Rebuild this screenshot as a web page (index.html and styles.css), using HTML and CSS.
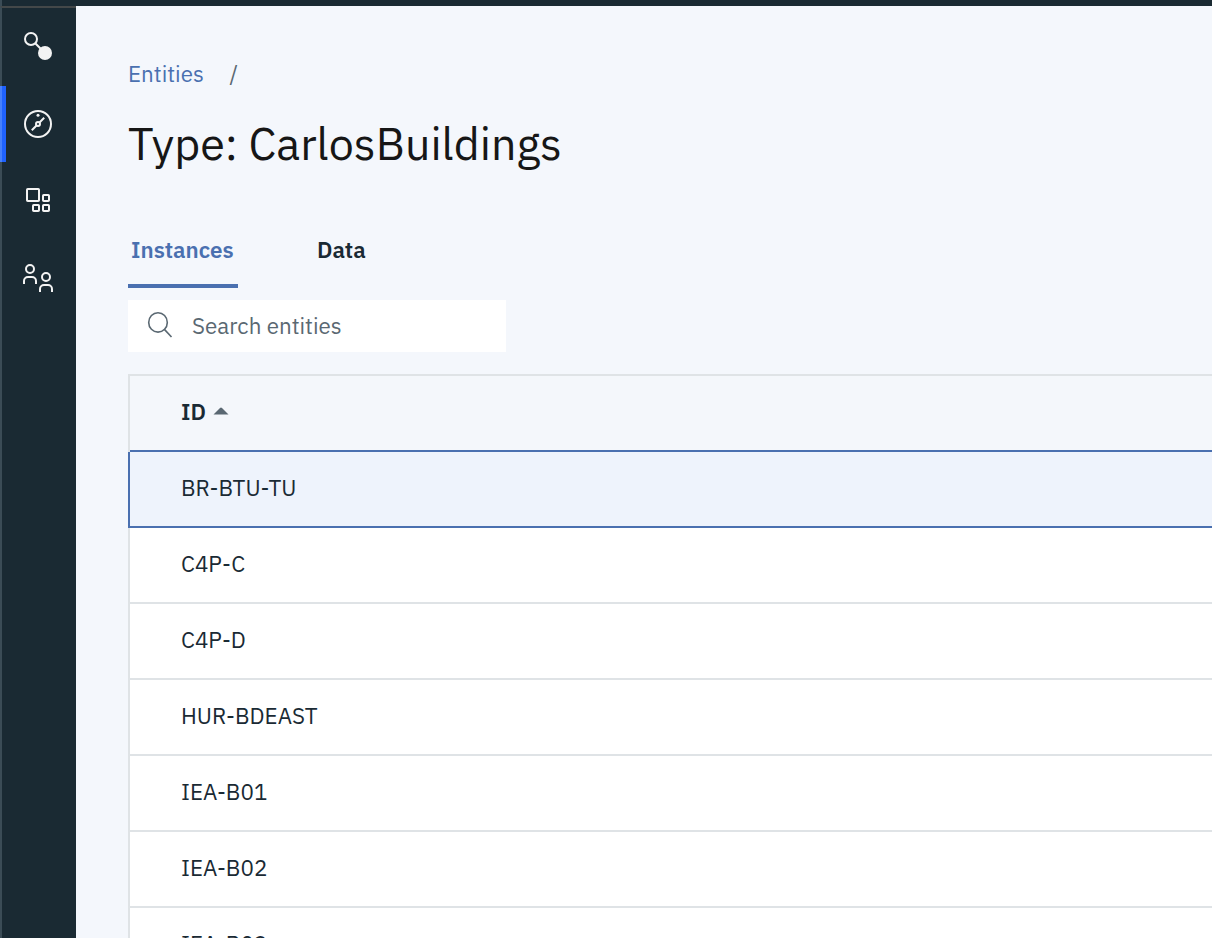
FILE: index.html
```html
<!DOCTYPE html>
<html lang="en">
<head>
<meta charset="utf-8">
<title>Type: CarlosBuildings</title>
<link rel="stylesheet" href="styles.css">
</head>
<body>
<header class="topbar"></header>
<div class="shell">
  <nav class="rail">
    <a class="rail-item"><svg class="rail-icon" viewBox="0 0 32 32"><circle cx="9" cy="7" r="6"/><path d="M13.2 11.2 20 18"/><circle class="solid" cx="23" cy="21" r="7"/></svg></a>
    <a class="rail-item active"><svg class="rail-icon" viewBox="0 0 32 32"><circle cx="16" cy="16" r="13"/><circle cx="16" cy="16" r="2"/><path d="M17.5 14.5 22.2 9.8M14.5 17.5 9.8 22.2"/><circle class="solid" cx="16" cy="7.3" r="1.5"/></svg></a>
    <a class="rail-item"><svg class="rail-icon" viewBox="0 0 32 32"><rect x="5" y="5" width="12" height="12" rx="0.8"/><rect x="21" y="11" width="6" height="6" rx="0.8"/><rect x="11" y="21" width="6" height="6" rx="0.8"/><rect x="21" y="21" width="6" height="6" rx="0.8"/></svg></a>
    <a class="rail-item"><svg class="rail-icon" viewBox="0 0 32 32"><circle cx="8" cy="9" r="4"/><path d="M2 24v-3a4 4 0 0 1 4-4h4a4 4 0 0 1 4 4v3"/><circle cx="24" cy="17" r="4"/><path d="M18 32v-3a4 4 0 0 1 4-4h4a4 4 0 0 1 4 4v3"/></svg></a>
  </nav>
  <main class="content">
    <div class="crumbs"><a class="crumb">Entities</a><span class="slash">/</span></div>
    <h1 class="title">Type: CarlosBuildings</h1>
    <div class="tabs">
      <div class="tab selected">Instances</div>
      <div class="tab">Data</div>
    </div>
    <div class="search">
      <svg class="search-icon" viewBox="0 0 28 28"><ellipse cx="12" cy="12.4" rx="9.3" ry="9.7"/><path d="M18.4 19.4 25.5 27"/></svg>
      <span class="placeholder">Search entities</span>
    </div>
    <div class="table">
      <div class="row head">ID<svg class="sort" viewBox="0 0 16 8"><path d="M.5 7.5 7 .9Q8 0 9 .9L15.5 7.5Z"/></svg></div>
      <div class="row current">BR-BTU-TU</div>
      <div class="row">C4P-C</div>
      <div class="row">C4P-D</div>
      <div class="row">HUR-BDEAST</div>
      <div class="row">IEA-B01</div>
      <div class="row">IEA-B02</div>
      <div class="row">IEA-B03</div>
    </div>
  </main>
</div>
</body>
</html>
```
FILE: styles.css
```css
* { box-sizing: border-box; }
body {
  margin: 0;
  height: 938px;
  overflow: hidden;
  background: #f4f7fc;
  color: #1a2a34;
  font: 22.4px/30px "IBM Plex Sans", "Noto Sans", sans-serif;
}
.topbar { height: 6px; background: #1a2a33; border-left: 2px solid #3b4c56; }
.shell { display: flex; height: 932px; }
.rail {
  flex: 0 0 76px;
  padding-top: 2px;
  background: #1a2a33;
  border-top: 2px solid #444849;
  border-left: 2px solid #3b4c56;
}
.rail-item { display: flex; align-items: center; height: 76px; padding-left: 20px; }
.rail-item.active {
  margin-left: -2px;
  padding-left: 16px;
  border-left: 6px solid #1f62fe;
  border-image: linear-gradient(to right, #4780fc 2px, #1f62fe 2px) 0 0 0 6;
}
.rail-icon { width: 32px; height: 32px; overflow: visible; fill: none; stroke: #f3f3f3; stroke-width: 2; }
.rail-icon .solid { fill: #f3f3f3; stroke: none; }
.content { flex: 1; min-width: 0; padding: 53px 0 0 52px; }
.crumbs { display: flex; height: 30px; color: #4a70b0; }
.crumb { width: 101.5px; }
.slash { color: #5a6872; }
.title {
  margin: 24px 0 0;
  height: 60px;
  font: 400 44.8px/60px "IBM Plex Sans", "Open Sans", sans-serif;
  color: #161616;
  white-space: nowrap;
}
.tabs { display: flex; gap: 76px; height: 76px; margin-top: 39px; }
.tab { height: 76px; padding: 23px 3px 0; font-weight: 600; }
.tab.selected { width: 110px; color: #4a70b0; border-bottom: 4px solid #4a70b0; }
.search {
  display: flex;
  align-items: center;
  width: 378px;
  height: 52px;
  margin-top: 12px;
  padding-left: 18px;
  background: #fff;
  color: #5a6872;
}
.search-icon { width: 28px; height: 28px; margin: 0 18px 4px 0; fill: none; stroke: #5a6872; stroke-width: 1.6; }
.table { margin-top: 22px; border-top: 2px solid #dfe3e6; }
.row {
  display: flex;
  align-items: center;
  height: 76px;
  padding: 0 0 2px 51px;
  background: #fff;
  border-left: 2px solid #dfe3e6;
  border-bottom: 2px solid #dfe3e6;
  white-space: nowrap;
}
.row.head {
  padding-bottom: 4px;
  background: #f4f7fb;
  border-bottom: 0;
  box-shadow: inset 0 -2px #4a70b0;
  font-weight: 600;
}
.row.current { background: #eef3fc; border-color: #4a70b0; }
.sort { width: 16px; height: 8px; margin: 0 0 2px 7px; fill: #5a6872; }
```
